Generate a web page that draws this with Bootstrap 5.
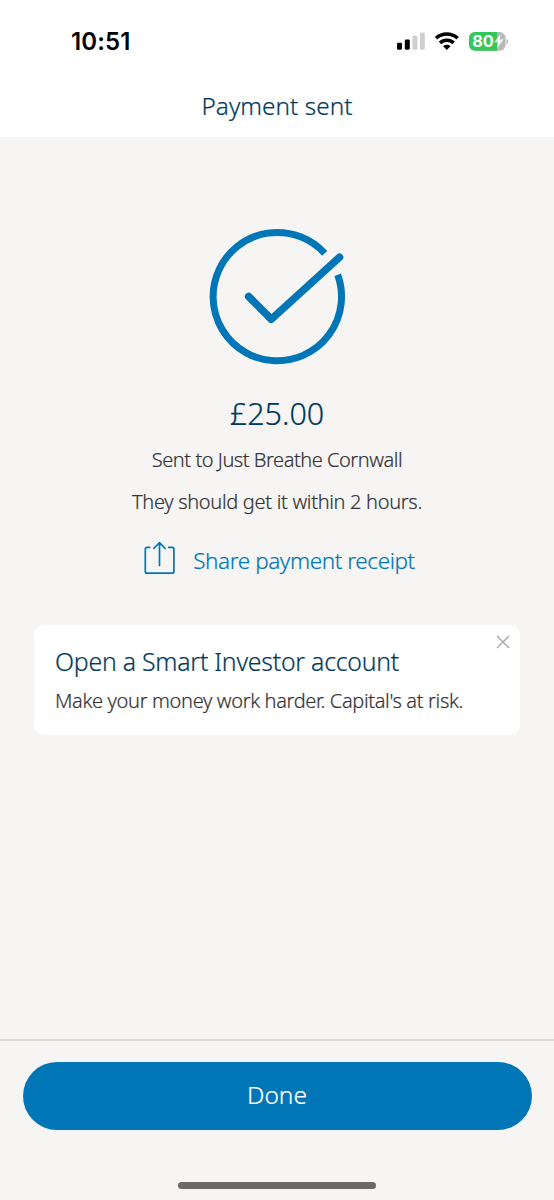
<!DOCTYPE html>
<html lang="en">
<head>
<meta charset="utf-8">
<meta name="viewport" content="width=device-width, initial-scale=1">
<title>Payment sent</title>
<link href="https://cdn.jsdelivr.net/npm/bootstrap@5.3.0/dist/css/bootstrap.min.css" rel="stylesheet">
<style>
  :root { --blue: #0076b6; --navy: #00395d; --paper: #f6f5f3; }
  body { background: var(--paper); color: #333; font-family: "Noto Sans", "Open Sans", sans-serif; font-weight: 300; -webkit-text-stroke: .2px currentColor; }
  svg { -webkit-text-stroke: 0; }
  .screen { height: 1200px; }
  .status { height: 75px; padding: 8px 45px 0 71px; }
  .status svg { margin-top: 21px; }
  .clock { font: 600 24px/34px Inter, sans-serif; color: #000; letter-spacing: .1px; margin-top: 17px; -webkit-text-stroke: 0; }
  .title-bar { height: 62px; font-size: 24.3px; line-height: 62px; letter-spacing: .05px; color: var(--navy); }
  .tick { margin: 83px 0 -9px 0; }
  .amount { font-size: 30.5px; line-height: 40px; margin-top: 27px; color: var(--navy); }
  .copy { font-size: 20px; line-height: 30px; letter-spacing: -.31px; margin-top: 12px; }
  .copy-tight { letter-spacing: -.46px; }
  .share { font-size: 22.5px; line-height: 34px; gap: 18px; margin: 24px 0 0 5px; color: var(--blue); letter-spacing: -.42px; }
  .share span { padding-top: 3px; }
  .offer { margin: 47px 34px 0; height: 110px; border-radius: 10px; padding: 19px 21px; }
  .offer h2 { font-size: 24.8px; line-height: 34px; font-weight: 300; letter-spacing: -.22px; color: var(--navy); }
  .offer .copy { margin-top: 8px; letter-spacing: -.34px; }
  .dismiss { top: 10px; right: 10px; }
  .dock { height: 161px; border-top: 2px solid #dedddc; padding: 21px 22.5px 0; }
  .btn-done { height: 67.5px; border-radius: 34px; background: var(--blue); color: #fff; font-size: 24.5px; font-weight: 300; }
  .home-bar { width: 198px; height: 7px; margin-top: 52px; background: #6b6a6a; }
</style>
</head>
<body>
<div class="screen d-flex flex-column">
  <header class="bg-white">
    <div class="status d-flex justify-content-between align-items-start">
      <div class="clock">10:51</div>
      <svg width="113" height="24" viewBox="0 0 113 24" aria-label="Signal, Wi-Fi, battery">
        <rect x="1" y="13.700" width="5" height="7" rx="1.400"/>
        <rect x="8.800" y="10.500" width="5" height="10.200" rx="1.400"/>
        <rect x="16.400" y="6.800" width="5" height="13.900" rx="1.400" fill="#cfcfd1"/>
        <rect x="24" y="3.500" width="4.800" height="17.200" rx="1.400" fill="#cfcfd1"/>
        <g fill="none" stroke="#000" stroke-width="3.500">
          <path d="M40 9.300a16 16 0 0 1 21.600 0"/>
          <path d="M44 13.900a10 10 0 0 1 13.600 0"/>
        </g>
        <path d="M50.800 21l-3.700-3.800a5.400 5.400 0 0 1 7.400 0z"/>
        <rect x="73" y="3" width="36.600" height="18.800" rx="6" fill="#b9b9bb"/>
        <path d="M79 3h22v18.800H79a6 6 0 0 1-6-6V9a6 6 0 0 1 6-6z" fill="#34c759"/>
        <path d="M110.500 9.400v6q1.700-.8 1.700-3t-1.700-3z" fill="#b9b9bb"/>
        <text x="76.200" y="18.200" font-family="Inter, sans-serif" font-weight="700" font-size="16.300" textLength="21.500" fill="#fff">80</text>
        <path d="M104.600 5.300l-6.300 8h4l-1.400 5.700 6.600-8.400h-4.200z" fill="#fff"/>
      </svg>
    </div>
    <h1 class="title-bar text-center fw-light mb-0">Payment sent</h1>
  </header>
  <main class="flex-grow-1 text-center d-flex flex-column">
    <svg class="tick align-self-center flex-shrink-0" width="155" height="155" viewBox="0 0 155 155" fill="none" stroke="#0076b6" stroke-width="7" aria-hidden="true">
      <path d="M124.700 33.300A64.200 64.200 0 1 0 137.700 54.800"/>
      <path d="M48.700 76.500L71.300 99.300 139.500 37.300" stroke-width="7.600" stroke-linecap="round" stroke-linejoin="round"/>
    </svg>
    <div class="amount">£25.00</div>
    <p class="copy copy-tight mb-0">Sent to Just Breathe Cornwall</p>
    <p class="copy mb-0">They should get it within 2 hours.</p>
    <a class="share d-flex justify-content-center text-decoration-none" href="#">
      <svg width="31" height="34" viewBox="0 0 31 34" fill="none" stroke="#0076b6" stroke-width="1.700" stroke-linejoin="round" stroke-linecap="round" aria-hidden="true">
        <path d="M5.800 6.300H3a1.700 1.700 0 0 0-1.700 1.700v22.500a1.700 1.700 0 0 0 1.700 1.700h25.200a1.700 1.700 0 0 0 1.700-1.700V8a1.700 1.700 0 0 0-1.700-1.700h-3.500M15.500 24.500V1.800M9.800 7.500l5.700-5.800 5.700 5.800"/>
      </svg>
      <span>Share payment receipt</span>
    </a>
    <section class="offer bg-white position-relative text-start">
      <h2 class="mb-0">Open a Smart Investor account</h2>
      <p class="copy mb-0">Make your money work harder. Capital's at risk.</p>
      <svg class="dismiss position-absolute" width="14" height="14" viewBox="0 0 14 14" stroke="#a5a5a5" stroke-width="1.300" aria-label="Close"><path d="M1 1l12 12M13 1L1 13"/></svg>
    </section>
  </main>
  <footer class="dock">
    <button class="btn btn-done w-100 border-0 p-0">Done</button>
    <div class="home-bar rounded-pill mx-auto"></div>
  </footer>
</div>
<script src="https://cdn.jsdelivr.net/npm/bootstrap@5.3.0/dist/js/bootstrap.bundle.min.js"></script>
</body>
</html>
